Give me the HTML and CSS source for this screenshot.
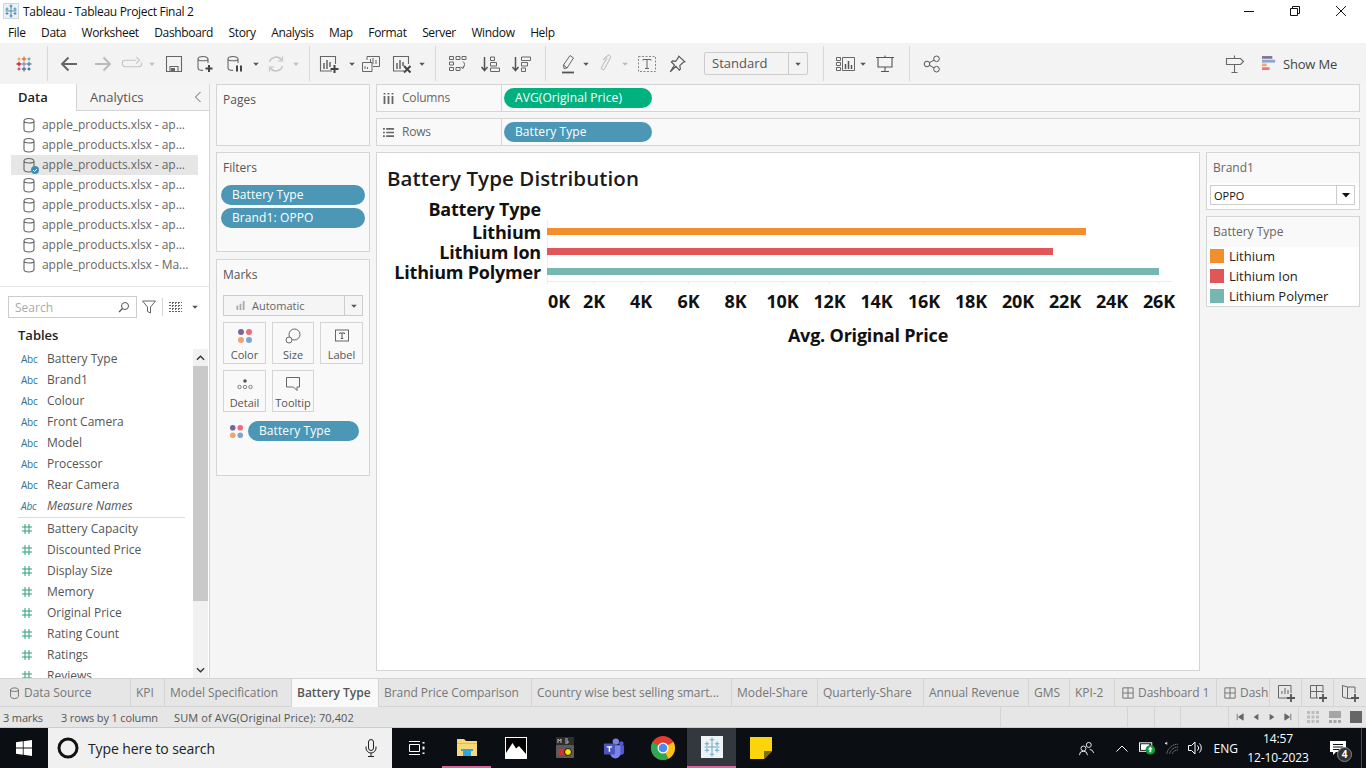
FILE: index.html
```html
<!DOCTYPE html>
<html lang="en">
<head>
<meta charset="utf-8">
<title>Tableau - Tableau Project Final 2</title>
<link rel="stylesheet" href="styles.css">
</head>
<body>
<svg class="defs" width="0" height="0">
  <symbol id="cyl" viewBox="0 0 14 16"><path d="M2 4v8.500c0 1.300 2.200 2.500 5 2.500s5-1.200 5-2.500V4M2 4c0-1.500 2.200-2.500 5-2.500S12 2.500 12 4 9.800 6 7 6 2 5.500 2 4z" fill="none" stroke="#666" stroke-width="1.100"/></symbol>
  <symbol id="caret" viewBox="0 0 8 8"><path d="M1.200 2.800h5.600L4 5.800z" fill="#555"/></symbol>
  <symbol id="caretl" viewBox="0 0 8 8"><path d="M1.200 2.800h5.600L4 5.800z" fill="#bbb"/></symbol>
  <symbol id="hash" viewBox="0 0 12 12"><path d="M4 1v10M8 1v10M1 4h10M1 8h10" stroke="#2e9e7c" stroke-width="1" fill="none"/></symbol>
  <symbol id="dots" viewBox="0 0 16 16"><circle cx="4" cy="4" r="3" fill="#7b6594"/><circle cx="12" cy="4" r="3" fill="#ef6a7c"/><circle cx="4" cy="12" r="3" fill="#f2a26c"/><circle cx="12" cy="12" r="3" fill="#7fa6cf"/></symbol>
  <symbol id="board" viewBox="0 0 14 14"><path d="M1 1h12v12H1zM7 1v12M1 7h12" fill="none" stroke="#666"/></symbol>
</svg>

<header class="titlebar">
  <svg class="app-icon" viewBox="0 0 16 16"><rect x=".5" y=".5" width="15" height="15" fill="#eaf2f7" stroke="#cbd6dd"/><path d="M8 2.500v11M2.500 8h11M4 4.500v3M2.500 6h3M12 4.500v3M10.500 6h3M4 9v3M2.500 10.500h3M12 9v3M10.500 10.500h3M8 1.500v3M6.500 3h3M8 11.500v3M6.500 13h3" stroke="#4b8fb5" stroke-width="1" fill="none"/></svg>
  <span class="title-text">Tableau - Tableau Project Final 2</span>
  <div class="winctl">
    <svg viewBox="0 0 12 12"><path d="M1 6.500h10" stroke="#111"/></svg>
    <svg viewBox="0 0 12 12"><path d="M1.500 3.500h7v7h-7zM3.500 3.500v-2h7v7h-2" fill="none" stroke="#111"/></svg>
    <svg viewBox="0 0 12 12"><path d="M1 1l10 10M11 1L1 11" stroke="#111"/></svg>
  </div>
</header>

<nav class="menubar">
  <span>File</span><span>Data</span><span>Worksheet</span><span>Dashboard</span><span>Story</span><span>Analysis</span><span>Map</span><span>Format</span><span>Server</span><span>Window</span><span>Help</span>
</nav>

<div class="toolbar">
  <span class="ti w47"><svg viewBox="0 0 18 18" class="i18"><path d="M9 1.500v5M6.800 4h4.400" stroke="#e8762c" stroke-width="1.300"/><path d="M9 11.500v5M6.800 14h4.400" stroke="#5a6f9e" stroke-width="1.300"/><path d="M1.500 9h5M4 6.800v4.400" stroke="#c72037" stroke-width="1.300"/><path d="M11.500 9h5M14 6.800v4.400" stroke="#5b879b" stroke-width="1.300"/><path d="M4 2.500v3M2.500 4h3" stroke="#eb912b"/><path d="M14 2.500v3M12.500 4h3" stroke="#59879b"/><path d="M4 12.500v3M2.500 14h3" stroke="#c72037"/><path d="M14 12.500v3M12.500 14h3" stroke="#1f457e"/><path d="M9 7v4M7 9h4" stroke="#7a6f9e"/></svg></span>
  <i class="sep"></i>
  <span class="ti w42"><svg viewBox="0 0 20 20" class="i20"><path d="M18 10H3M9.500 3.500L3 10l6.500 6.500" fill="none" stroke="#666" stroke-width="2"/></svg></span>
  <span class="ti w26"><svg viewBox="0 0 20 20" class="i20"><path d="M2 10h15M10.500 3.500L17 10l-6.500 6.500" fill="none" stroke="#bbb" stroke-width="2"/></svg></span>
  <span class="ti w32"><svg viewBox="0 0 20 14" class="i20w"><path d="M14 4H3.500A2.500 2.500 0 0 0 1 6.500v1A2.500 2.500 0 0 0 3.500 10h13A2.500 2.500 0 0 0 19 7.500V6M14 1l3 3-3 3" fill="none" stroke="#c4c4c4"/></svg></span>
  <span class="ti w8"><svg class="c8"><use href="#caretl"/></svg></span>
  <span class="ti w36"><svg viewBox="0 0 18 18" class="i18"><path d="M1.500 1.500h15v15h-15zM5 16.500v-5h8v5" fill="none" stroke="#666" stroke-width="1.100"/><path d="M6 13h4v3.500H6z" fill="#666"/></svg></span>
  <span class="ti w26"><svg viewBox="0 0 18 18" class="i18"><path d="M2 4v9c0 1.300 2 2.400 5 2.400M12 8V4M2 4c0-1.500 2.200-2.500 5-2.500S12 2.500 12 4 9.800 5.800 7 5.800 2 5.500 2 4z" fill="none" stroke="#666" stroke-width="1.100"/><path d="M13 10v7M9.500 13.500h7" stroke="#444" stroke-width="2"/></svg></span>
  <span class="ti w34"><svg viewBox="0 0 18 18" class="i18"><path d="M2 4v9c0 1.300 2 2.400 5 2.400M12 8V4M2 4c0-1.500 2.200-2.500 5-2.500S12 2.500 12 4 9.800 5.800 7 5.800 2 5.500 2 4z" fill="none" stroke="#666" stroke-width="1.100"/><path d="M11 10.500v6M15 10.500v6" stroke="#444" stroke-width="2"/></svg></span>
  <span class="ti w8"><svg class="c8"><use href="#caret"/></svg></span>
  <span class="ti w32"><svg viewBox="0 0 18 18" class="i18"><path d="M2.500 7A6.700 6.700 0 0 1 14.500 5M15.500 11A6.700 6.700 0 0 1 3.500 13" fill="none" stroke="#c4c4c4" stroke-width="1.500"/><path d="M15.500 1.500V6h-4.500M2.500 16.500V12H7" fill="none" stroke="#c4c4c4" stroke-width="1.200"/></svg></span>
  <span class="ti w8"><svg class="c8"><use href="#caretl"/></svg></span>
  <span class="ti w9"></span>
  <i class="sep"></i>
  <span class="ti w38"><svg viewBox="0 0 20 18" class="i20"><path d="M13 16H1.500V1.500h15V9" fill="none" stroke="#666" stroke-width="1.100"/><path d="M5 8v6M8 5v9M11 7v5" stroke="#666" stroke-width="1.500"/><path d="M15.500 10v8M11.500 14h8" stroke="#444" stroke-width="2"/></svg></span>
  <span class="ti w8"><svg class="c8"><use href="#caret"/></svg></span>
  <span class="ti w30"><svg viewBox="0 0 20 18" class="i20"><path d="M6 5V1.500h12.500v10H12" fill="none" stroke="#666"/><path d="M1.500 7.500H11v9H1.500z" fill="#f3f3f3" stroke="#666"/><path d="M9.500 4v3M12 3v6M15 5v4M4 11v3M6.500 12v2" stroke="#666"/></svg></span>
  <span class="ti w32"><svg viewBox="0 0 20 18" class="i20"><path d="M12 16H1.500V1.500h15V9" fill="none" stroke="#666" stroke-width="1.100"/><path d="M5 8v6M8 5v9M11 7v4" stroke="#666" stroke-width="1.500"/><path d="M12 11l6.500 6.500M18.500 11L12 17.500" stroke="#444" stroke-width="2"/></svg></span>
  <span class="ti w8"><svg class="c8"><use href="#caret"/></svg></span>
  <span class="ti w9"></span>
  <i class="sep"></i>
  <span class="ti w44"><svg viewBox="0 0 20 18" class="i20"><path d="M1.500 1.500h4v3h-4zM1.500 7h4v3h-4zM1.500 12.500h4v3h-4zM8 1.500h4v3H8zM14 1.500h4v3h-4zM8 12.500h4v3H8z" fill="none" stroke="#666"/><path d="M15 6.500c2 1.500 2 4.500 0 6.500M12.500 12l2.500 1.500.5-2.500" fill="none" stroke="#666"/></svg></span>
  <span class="ti w19"><svg viewBox="0 0 20 18" class="i20"><path d="M4.500 2v13M1.500 12l3 3.500 3-3.500" fill="none" stroke="#555" stroke-width="1.500"/><path d="M10.500 2h4v3.500h-4zM10.500 7.500h6v3.500h-6zM10.500 13h9v3.500h-9z" fill="none" stroke="#666"/></svg></span>
  <span class="ti w44"><svg viewBox="0 0 20 18" class="i20"><path d="M4.500 2v13M1.500 12l3 3.500 3-3.500" fill="none" stroke="#555" stroke-width="1.500"/><path d="M10.500 2h9v3.500h-9zM10.500 7.500h6v3.500h-6zM10.500 13h4v3.500h-4z" fill="none" stroke="#666"/></svg></span>
  <span class="ti w2"></span>
  <i class="sep"></i>
  <span class="ti w8"></span>
  <span class="ti w28"><svg viewBox="0 0 14 20" class="i20"><path d="M3 14.500l-.5-3.500L9 1.500l3.500 2.500L6 14zM2.500 11l3.500 3" fill="none" stroke="#666"/><path d="M1 18.500h12" stroke="#555" stroke-width="1.800"/></svg></span>
  <span class="ti w8"><svg class="c8"><use href="#caret"/></svg></span>
  <span class="ti w31"><svg viewBox="0 0 14 20" class="i20"><path d="M4 6L9 1.500c1-.8 3 .5 2.500 2L5.500 15c-.8 1.500-3.500.5-3-1.500L8 4" fill="none" stroke="#c4c4c4" stroke-width="1.200"/></svg></span>
  <span class="ti w8"><svg class="c8"><use href="#caretl"/></svg></span>
  <span class="ti w36"><svg viewBox="0 0 18 16" class="i18"><rect x=".5" y=".5" width="17" height="15" fill="none" stroke="#888" stroke-dasharray="2 1.500"/><path d="M5 4.500V3.500h8v1M9 3.500v9M7 12.500h4" fill="none" stroke="#666"/></svg></span>
  <span class="ti w24"><svg viewBox="0 0 16 16" class="i18"><path d="M9.500 1l5.500 5-1.500.5-3 3 .5 3-1 1L7 10 2 15l3.800-6L3 6.200l1-1 2.800.5L9 2.500z" fill="none" stroke="#555"/></svg></span>
  <span class="ti w15"></span>
  <div class="select std"><span class="select-text">Standard</span><span class="select-btn"><svg class="c8"><use href="#caret"/></svg></span></div>
  <span class="ti w15"></span>
  <i class="sep"></i>
  <span class="ti w7"></span>
  <span class="ti w28"><svg viewBox="0 0 20 16" class="i20"><path d="M1.500 1.500h4v3h-4zM1.500 6.500h4v3h-4zM1.500 11.500h4v3h-4zM7.500 1.500h12v13h-12z" fill="none" stroke="#666"/><path d="M10.500 8v5M13.500 5v8M16.500 9v4" stroke="#555" stroke-width="1.500"/></svg></span>
  <span class="ti w8"><svg class="c8"><use href="#caret"/></svg></span>
  <span class="ti w36"><svg viewBox="0 0 18 18" class="i18"><path d="M0 2.500h18M2 2.500v9.500h14V2.500M9 12v4M5 16.500h8M9 .5v2" fill="none" stroke="#555" stroke-width="1.100"/></svg></span>
  <span class="ti w6"></span>
  <i class="sep"></i>
  <span class="ti w44"><svg viewBox="0 0 18 18" class="i18"><circle cx="4" cy="9" r="2.800" fill="none" stroke="#555"/><circle cx="13.500" cy="3.800" r="2.800" fill="none" stroke="#555"/><circle cx="13.500" cy="14.200" r="2.800" fill="none" stroke="#555"/><path d="M6.500 7.700l4.500-2.600M6.500 10.300l4.500 2.600" stroke="#555"/></svg></span>
  <span class="tb-right">
    <svg viewBox="0 0 20 20" class="i20"><path d="M1.500 4.500h14l3 3-3 3h-14zM9.500 1.500v3M9.500 10.500v8M6.500 18.500h6" fill="none" stroke="#666" stroke-width="1.100"/></svg>
    <svg viewBox="0 0 16 16" class="showme"><path d="M0 0h11v3H0z" fill="#8a7699"/><path d="M0 4h14v3H0z" fill="#84a7cf"/><path d="M0 8h5v3H0z" fill="#f2a874"/><path d="M0 12h8v3H0z" fill="#f2737f"/></svg>
    <span class="showme-text">Show Me</span>
  </span>
</div>

<main class="main">
  <aside class="left">
    <div class="tabs-lr">
      <span class="tab-data">Data</span>
      <span class="tab-an">Analytics<svg viewBox="0 0 8 12" class="chev"><path d="M6.500 1L1.500 6l5 5" fill="none" stroke="#666"/></svg></span>
    </div>
    <ul class="sources">
      <li><svg class="cyl"><use href="#cyl"/></svg>apple_products.xlsx - ap...</li>
      <li><svg class="cyl"><use href="#cyl"/></svg>apple_products.xlsx - ap...</li>
      <li class="sel"><span class="cyl-wrap"><svg class="cyl"><use href="#cyl"/></svg><svg class="check" viewBox="0 0 8 8"><circle cx="4" cy="4" r="4" fill="#3d8fb0"/><path d="M2 4l1.500 1.500L6 3" stroke="#fff" fill="none"/></svg></span>apple_products.xlsx - ap...</li>
      <li><svg class="cyl"><use href="#cyl"/></svg>apple_products.xlsx - ap...</li>
      <li><svg class="cyl"><use href="#cyl"/></svg>apple_products.xlsx - ap...</li>
      <li><svg class="cyl"><use href="#cyl"/></svg>apple_products.xlsx - ap...</li>
      <li><svg class="cyl"><use href="#cyl"/></svg>apple_products.xlsx - ap...</li>
      <li><svg class="cyl"><use href="#cyl"/></svg>apple_products.xlsx - Ma...</li>
    </ul>
    <div class="searchrow">
      <div class="search"><span>Search</span><svg viewBox="0 0 12 12" class="mag"><circle cx="7" cy="5" r="3.500" fill="none" stroke="#555"/><path d="M4.500 7.500L1 11" stroke="#555" stroke-width="1.300"/></svg></div>
      <svg viewBox="0 0 14 14" class="funnel"><path d="M.5 1h13L8.500 7v6l-3-1.500V7z" fill="none" stroke="#666"/></svg>
      <i class="vsep"></i>
      <svg viewBox="0 0 13 10" class="grid-i"><path d="M0 .5h13M0 3.500h13M0 6.500h13M0 9.500h13M3.500 0v10M6.500 0v10M9.500 0v10" stroke="#666" stroke-dasharray="2 1" fill="none"/></svg>
      <svg class="c8"><use href="#caret"/></svg>
    </div>
    <h2 class="tables-h">Tables</h2>
    <div class="fields-wrap">
      <ul class="fields">
        <li><b class="abc">Abc</b>Battery Type</li>
        <li><b class="abc">Abc</b>Brand1</li>
        <li><b class="abc">Abc</b>Colour</li>
        <li><b class="abc">Abc</b>Front Camera</li>
        <li><b class="abc">Abc</b>Model</li>
        <li><b class="abc">Abc</b>Processor</li>
        <li><b class="abc">Abc</b>Rear Camera</li>
        <li class="ital"><b class="abc">Abc</b>Measure Names</li>
        <li class="divider" aria-hidden="true"></li>
        <li><svg class="hash"><use href="#hash"/></svg>Battery Capacity</li>
        <li><svg class="hash"><use href="#hash"/></svg>Discounted Price</li>
        <li><svg class="hash"><use href="#hash"/></svg>Display Size</li>
        <li><svg class="hash"><use href="#hash"/></svg>Memory</li>
        <li><svg class="hash"><use href="#hash"/></svg>Original Price</li>
        <li><svg class="hash"><use href="#hash"/></svg>Rating Count</li>
        <li><svg class="hash"><use href="#hash"/></svg>Ratings</li>
        <li><svg class="hash"><use href="#hash"/></svg>Reviews</li>
      </ul>
      <div class="vscroll">
        <span class="sb-btn"><svg viewBox="0 0 10 6" class="sb-a"><path d="M1 5l4-4 4 4" fill="none" stroke="#333" stroke-width="1.500"/></svg></span>
        <span class="sb-thumb"></span>
        <span class="sb-rest"></span>
        <span class="sb-btn"><svg viewBox="0 0 10 6" class="sb-a"><path d="M1 1l4 4 4-4" fill="none" stroke="#333" stroke-width="1.500"/></svg></span>
      </div>
    </div>
  </aside>

  <section class="cards">
    <div class="card pages"><h3>Pages</h3></div>
    <div class="card filters">
      <h3>Filters</h3>
      <div class="pill blue fp">Battery Type</div>
      <div class="pill blue fp">Brand1: OPPO</div>
    </div>
    <div class="card marks">
      <h3>Marks</h3>
      <div class="select marktype"><svg viewBox="0 0 10 10" class="mt-i"><path d="M1.500 5v5M5 3v7M8.500 0v10" stroke="#aaa" stroke-width="2"/></svg><span class="select-text">Automatic</span><span class="select-btn"><svg class="c8"><use href="#caret"/></svg></span></div>
      <div class="mark-grid">
        <div class="mbtn"><svg class="mi" viewBox="0 0 16 16"><use href="#dots"/></svg><span>Color</span></div>
        <div class="mbtn"><svg class="mi" viewBox="0 0 16 16"><circle cx="9.500" cy="6.500" r="5.500" fill="#f9f9f9" stroke="#666"/><circle cx="4" cy="12" r="3" fill="#f9f9f9" stroke="#666"/></svg><span>Size</span></div>
        <div class="mbtn"><svg class="mi" viewBox="0 0 16 16"><rect x="1.500" y="2" width="13" height="11" fill="none" stroke="#666"/><path d="M5.500 6V5h5v1M8 5v5.500M6.800 10.500h2.400" fill="none" stroke="#555"/></svg><span>Label</span></div>
        <div class="mbtn"><svg class="mi" viewBox="0 0 16 16"><circle cx="8" cy="5" r="1.800" fill="#555"/><circle cx="2.500" cy="11" r="1.700" fill="none" stroke="#666" stroke-width=".8"/><circle cx="8" cy="11" r="1.700" fill="none" stroke="#666" stroke-width=".8"/><circle cx="13.500" cy="11" r="1.700" fill="none" stroke="#666" stroke-width=".8"/></svg><span>Detail</span></div>
        <div class="mbtn"><svg class="mi" viewBox="0 0 16 16"><path d="M1.500 1.500h13v9.500h-2.500v3.500L8.500 11h-7z" fill="none" stroke="#666"/></svg><span>Tooltip</span></div>
      </div>
      <div class="mark-pill"><svg class="md" viewBox="0 0 16 16"><use href="#dots"/></svg><div class="pill blue mp">Battery Type</div></div>
    </div>
  </section>

  <section class="work">
    <div class="shelf"><span class="shelf-l"><svg viewBox="0 0 11 11" class="shelf-i"><path d="M1.500 3v8M5.500 3v8M9.500 3v8M1.500 0v1.500M5.500 0v1.500M9.500 0v1.500" stroke="#666" stroke-width="1.800"/></svg><span class="shelf-t">Columns</span></span><div class="pill green sp">AVG(Original Price)</div></div>
    <div class="shelf"><span class="shelf-l"><svg viewBox="0 0 12 10" class="shelf-i"><path d="M0 1h2M0 5h2M0 9h2M3.500 1H12M3.500 5H12M3.500 9H12" stroke="#666" stroke-width="1.800"/></svg><span class="shelf-t">Rows</span></span><div class="pill blue sp">Battery Type</div></div>
    <div class="viz-row">
      <div class="viz">
        <h1 class="viz-title">Battery Type Distribution</h1>
        <svg class="plot" viewBox="0 0 822 170" role="img">
          <g class="hd"><text x="164" y="26" text-anchor="end">Battery Type</text></g>
          <path d="M170.500 30v62M170 91.500h625M170.500 91v3M217 91v3M264 91v3M311.500 91v3M358.500 91v3M405.500 91v3M452.500 91v3M499.500 91v3M547 91v3M594 91v3M641 91v3M688 91v3M735 91v3M782 91v3" stroke="#ececec" fill="none"/>
          <rect x="170" y="38" width="539" height="7" fill="#f28e2b"/>
          <rect x="170" y="58" width="506" height="7" fill="#e15759"/>
          <rect x="170" y="78" width="612" height="7" fill="#76b7b2"/>
          <g class="hd">
            <text x="164" y="49" text-anchor="end">Lithium</text>
            <text x="164" y="69" text-anchor="end">Lithium Ion</text>
            <text x="164" y="89" text-anchor="end">Lithium Polymer</text>
          </g>
          <g class="hd ticks" text-anchor="middle">
            <text x="182" y="118">0K</text><text x="217" y="118">2K</text><text x="264" y="118">4K</text><text x="311.500" y="118">6K</text><text x="358.500" y="118">8K</text><text x="405.500" y="118">10K</text><text x="452.500" y="118">12K</text><text x="499.500" y="118">14K</text><text x="547" y="118">16K</text><text x="594" y="118">18K</text><text x="641" y="118">20K</text><text x="688" y="118">22K</text><text x="735" y="118">24K</text><text x="782" y="118">26K</text>
          </g>
          <g class="hd"><text x="491" y="152" text-anchor="middle">Avg. Original Price</text></g>
        </svg>
      </div>
      <div class="side">
        <div class="qf">
          <div class="side-h">Brand1</div>
          <div class="qf-body"><div class="qf-sel"><span>OPPO</span><span class="qf-btn"><svg class="c8" viewBox="0 0 8 8"><path d="M0 2h8L4 6.500z" fill="#111"/></svg></span></div></div>
        </div>
        <div class="legend">
          <div class="side-h">Battery Type</div>
          <ul class="legend-body">
            <li><i class="sw sw-o"></i>Lithium</li>
            <li><i class="sw sw-r"></i>Lithium Ion</li>
            <li><i class="sw sw-t"></i>Lithium Polymer</li>
          </ul>
        </div>
      </div>
    </div>
  </section>
</main>

<div class="sheet-tabs">
  <span class="st st-ds"><svg class="cyl" viewBox="0 0 14 16"><use href="#cyl"/></svg>Data Source</span>
  <span class="st st-kpi">KPI</span>
  <span class="st st-ms">Model Specification</span>
  <span class="st st-bt active">Battery Type</span>
  <span class="st st-bp">Brand Price Comparison</span>
  <span class="st st-cw">Country wise best selling smart...</span>
  <span class="st st-mo">Model-Share</span>
  <span class="st st-qs">Quarterly-Share</span>
  <span class="st st-ar">Annual Revenue</span>
  <span class="st st-gm">GMS</span>
  <span class="st st-k2">KPI-2</span>
  <span class="st st-d1"><svg class="bd"><use href="#board"/></svg>Dashboard 1</span>
  <span class="st st-d2"><svg class="bd"><use href="#board"/></svg>Dash</span>
  <span class="st st-nb"><svg viewBox="0 0 18 18" class="i18"><path d="M10 14H1.500V1.500H14V9" fill="none" stroke="#666"/><path d="M5 10V7M8 10V4M11 10V6" stroke="#666"/><path d="M14 10v8M10 14h8" stroke="#555" stroke-width="1.800"/></svg></span>
  <span class="st st-nb"><svg viewBox="0 0 18 18" class="i18"><path d="M9 14H1.500V1.500H14V9M1.500 7.500H14M7.500 1.500V14" fill="none" stroke="#666"/><path d="M14 10v8M10 14h8" stroke="#555" stroke-width="1.800"/></svg></span>
  <span class="st st-nb st-last"><svg viewBox="0 0 18 18" class="i18"><path d="M1.500 1.500L6.500 3v11.500L1.500 13zM6.500 3h7.500v6M6.500 14.500H10" fill="none" stroke="#666"/><path d="M14 10v8M10 14h8" stroke="#555" stroke-width="1.800"/></svg></span>
</div>

<footer class="status">
  <span class="s1">3 marks</span><span class="s2">3 rows by 1 column</span><span class="s3">SUM of AVG(Original Price): 70,402</span>
  <span class="cells"><i class="c-a"></i><i class="c-b"></i><i class="c-b"></i><i class="c-c"></i></span>
  <span class="nav">
    <svg viewBox="0 0 10 10"><path d="M1.500 1v8M9 1v8L3 5z" stroke="#666" fill="#666"/></svg>
    <svg viewBox="0 0 10 10"><path d="M8 1v8L2 5z" fill="#666"/></svg>
    <svg viewBox="0 0 10 10"><path d="M2 1v8l6-4z" fill="#666"/></svg>
    <svg viewBox="0 0 10 10"><path d="M8.500 1v8M1 1v8l6-4z" stroke="#666" fill="#666"/></svg>
  </span>
  <span class="views">
    <svg viewBox="0 0 12 12"><path d="M0 0h3v3H0zM4.500 0h3v3h-3zM9 0h3v3H9zM0 4.500h3v3H0zM4.500 4.500h3v3h-3zM9 4.500h3v3H9zM0 9h3v3H0zM4.500 9h3v3h-3zM9 9h3v3H9z" fill="#bdbdbd"/></svg>
    <svg viewBox="0 0 12 12"><path d="M0 0h12v7H0zM0 9h3v3H0zM4.500 9h3v3h-3zM9 9h3v3H9z" fill="#a5a5a5"/></svg>
    <svg viewBox="0 0 12 12"><path d="M0 0h12v12H0z" fill="#666"/></svg>
  </span>
</footer>

<div class="taskbar">
  <span class="t-win"><svg viewBox="0 0 16 16"><path d="M0 2.300L6.800 1.300V7.600H0zM7.600 1.200L16 0V7.600H7.600zM0 8.400H6.800V14.700L0 13.700zM7.600 8.400H16V16L7.600 14.800z" fill="#fff"/></svg></span>
  <div class="t-search">
    <svg viewBox="0 0 22 22" class="cortana"><circle cx="11" cy="11" r="9" fill="none" stroke="#111" stroke-width="3"/></svg>
    <span class="t-search-text">Type here to search</span>
    <svg viewBox="0 0 12 18" class="mic"><rect x="3.500" y=".5" width="5" height="11" rx="2.500" fill="none" stroke="#222"/><path d="M1 7.500v1.500a5 5 0 0 0 10 0V7.500M6 14v3M3 17.500h6" fill="none" stroke="#222"/></svg>
  </div>
  <span class="t-taskview"><svg viewBox="0 0 18 14"><path d="M1 .5h11M1 13.500h11M1.500 3.500h10v7h-10z" fill="none" stroke="#fff"/><path d="M15.500 1v1.500M15.500 5.500v3M15.500 11.500V13" stroke="#fff" stroke-width="2"/></svg></span>
  <span class="t-app t-run t-explorer">
    <svg viewBox="0 0 22 20"><path d="M1 2h7l2 2h11v15H1z" fill="#f8d775"/><path d="M1 6h20v1H1z" fill="#e8b949"/><path d="M5 12h12v2h-2v5H7v-5H5z" fill="#2ea7e0"/></svg>
  </span>
  <span class="t-app"><svg viewBox="0 0 22 22"><rect width="22" height="22" fill="#fff"/><rect x="1" y="1" width="20" height="19" fill="#000"/><path d="M1 20v-4L7.500 6l3.500 5.500 3-2.500 7 8v3z" fill="#fff"/></svg></span>
  <span class="t-app"><svg viewBox="0 0 20 22"><rect x="1" y="0" width="18" height="8" fill="#2d2d2d"/><path d="M3 2v4M6 2v4M3 2l1.500 2L6 2M10 2h3M10 4h3M13 4v2h-3" fill="none" stroke="#bbb"/><rect x="1" y="8" width="18" height="13" rx="1" fill="#5a5a5a"/><circle cx="7" cy="15" r="3.500" fill="#d0342c"/><circle cx="13" cy="15" r="3.500" fill="#f4e20c" stroke="#111"/></svg></span>
  <span class="t-app"><svg viewBox="0 0 24 22"><circle cx="14" cy="4" r="3.500" fill="#7b83eb"/><circle cx="20" cy="6" r="2.500" fill="#5059c9"/><path d="M16 8h7v7a3.500 3.500 0 0 1-7 0z" fill="#5059c9"/><path d="M8 8h11v9a5.500 5.500 0 0 1-11 0z" fill="#7b83eb"/><rect x="1" y="6" width="12" height="12" rx="1" fill="#4b53bc"/><path d="M4 9h6v1.500H7.800V15H6.200v-4.500H4z" fill="#fff"/></svg></span>
  <span class="t-app"><svg viewBox="0 0 24 24" class="chrome"><circle cx="12" cy="12" r="12" fill="#e33b2e"/><path d="M12 12L22.400 6a12 12 0 0 1-5.200 16.800z" fill="#fbc116"/><path d="M12 12l5.200 10.800A12 12 0 0 1 1.600 6z" fill="#2da94f"/><circle cx="12" cy="12" r="5.500" fill="#fff"/><circle cx="12" cy="12" r="4.300" fill="#4a8af4"/></svg></span>
  <span class="t-app t-run t-active"><svg viewBox="0 0 24 24"><rect width="24" height="24" fill="#eef3f6"/><path d="M12 4v16M4 12h16M6.500 6v5M4 8.500h5M17.500 6v5M15 8.500h5M6.500 13v5M4 15.500h5M17.500 13v5M15 15.500h5M12 1.500v5M9.500 4h5M12 17.500v5M9.500 20h5" stroke="#6fa9cc" stroke-width="1.100"/></svg></span>
  <span class="t-app"><svg viewBox="0 0 22 22"><path d="M0 0h22v14l-8 8H0z" fill="#fbd40b"/><path d="M22 14l-8 8v-8z" fill="#7a6a10"/></svg></span>
  <div class="tray">
    <svg class="tr-p" viewBox="0 0 18 16"><circle cx="11" cy="4" r="2.800" fill="none" stroke="#fff"/><circle cx="5" cy="8" r="2.800" fill="none" stroke="#fff"/><path d="M.5 15.500a4.500 4.500 0 0 1 9 0M12 9a5 5 0 0 1 4.500 4" fill="none" stroke="#fff"/></svg>
    <svg class="tr-c" viewBox="0 0 12 7"><path d="M.5 6.500L6 1l5.500 5.500" fill="none" stroke="#fff"/></svg>
    <svg class="tr-b" viewBox="0 0 18 14"><rect x=".5" y="1.500" width="13" height="9" fill="none" stroke="#fff"/><rect x="2" y="3" width="9" height="6" fill="#fff"/><circle cx="12" cy="9" r="5" fill="#0f9d3a"/><path d="M12 5.500l2.500 3h-1.500v3h-2v-3H9.500z" fill="#fff"/></svg>
    <svg class="tr-w" viewBox="0 0 16 14"><path d="M1 1.500l2 1M3 .5v3M1 2.500l2-1" stroke="#fff" stroke-width=".8"/><path d="M3 13A12 12 0 0 1 15 3M6 13a9 9 0 0 1 9-7M9 13a6 6 0 0 1 6-4" fill="none" stroke="#8d8d8d" stroke-dasharray="1.500 .7"/></svg>
    <svg class="tr-v" viewBox="0 0 16 14"><path d="M.5 4.500h3L7 1v12L3.500 9.500h-3z" fill="none" stroke="#fff"/><path d="M9.500 4.500a3.500 3.500 0 0 1 0 5M11.500 2.500a6.500 6.500 0 0 1 0 9" fill="none" stroke="#fff"/></svg>
    <span class="tr-eng">ENG</span>
    <span class="clock"><span>14:57</span><span>12-10-2023</span></span>
    <span class="notif"><svg viewBox="0 0 16 15"><path d="M0 0h16v11H6l-3 3v-3H0z" fill="#fff"/><path d="M3 3.500h10M3 6h10M3 8.500h6" stroke="#111"/></svg><b class="badge">4</b></span>
    <i class="showdesk"></i>
  </div>
</div>
</body>
</html>
```

FILE: styles.css
```css
* { box-sizing: border-box; }
html, body { margin: 0; padding: 0; }
body { width: 1366px; height: 768px; overflow: hidden; background: #f5f5f5; font-family: "Open Sans", "Liberation Sans", sans-serif; font-size: 12px; color: #555; }
ul { list-style: none; margin: 0; padding: 0; }
h1, h2, h3 { margin: 0; }
svg { display: block; flex: none; }
i { font-style: normal; }
.defs { position: absolute; }

.titlebar { height: 22px; background: #fff; display: flex; align-items: center; padding-left: 3px; color: #111; }
.app-icon { width: 16px; height: 16px; }
.title-text { margin-left: 4px; font-size: 12px; letter-spacing: -.3px; }
.winctl { margin-left: auto; display: flex; gap: 34px; padding-right: 19px; }
.winctl svg { width: 12px; height: 12px; }

.menubar { height: 21px; background: #fff; display: flex; padding-left: 8px; color: #111; font-size: 12px; line-height: 22px; }
.menubar span { margin-right: 15.500px; letter-spacing: -.35px; }

.toolbar { height: 41px; background: #f3f3f3; display: flex; align-items: center; }
.ti { height: 24px; display: flex; align-items: center; justify-content: center; flex: none; }
.w2 { width: 2px; } .w6 { width: 6px; } .w7 { width: 7px; } .w8 { width: 8px; } .w9 { width: 9px; } .w15 { width: 15px; } .w19 { width: 19px; }
.w24 { width: 24px; } .w26 { width: 26px; } .w28 { width: 28px; } .w30 { width: 30px; } .w31 { width: 31px; } .w32 { width: 32px; } .w34 { width: 34px; } .w36 { width: 36px; }
.w38 { width: 38px; } .w42 { width: 42px; } .w44 { width: 44px; } .w47 { width: 47px; }
.sep { width: 1px; height: 35px; background: #d8d8d8; flex: none; }
.i18 { width: 18px; height: 18px; }
.i20 { width: 20px; height: 20px; }
.i20w { width: 22px; height: 15px; }
.c8 { width: 8px; height: 8px; }
.select { display: flex; align-items: center; border: 1px solid #ccc; background: #f3f3f3; }
.select-text { flex: 1; }
.select-btn { width: 18px; align-self: stretch; border-left: 1px solid #ccc; display: flex; align-items: center; justify-content: center; }
.std { width: 104px; height: 23px; padding-left: 7px; font-size: 13px; color: #555; flex: none; border-radius: 2px; }
.std .select-text { margin-top: -2px; }
.std .select-btn { width: 19px; }
.tb-right { margin-left: auto; display: flex; align-items: center; padding-right: 29px; color: #444; }
.showme { width: 15px; height: 15px; margin-left: 17px; }
.showme-text { margin-left: 6px; font-size: 13px; letter-spacing: -.2px; }

.main { height: 594px; display: flex; align-items: flex-start; }
.left { width: 210px; height: 594px; background: #fff; border-right: 1px solid #d6d6d6; overflow: hidden; flex: none; }
.tabs-lr { height: 27px; display: flex; }
.tab-data { width: 77px; padding-left: 18px; line-height: 26px; font-weight: 600; font-size: 13px; color: #222; border-right: 1px solid #d4d4d4; }
.tab-an { flex: 1; padding-left: 13px; line-height: 26px; font-size: 13px; border-bottom: 1px solid #d4d4d4; background: #f5f5f5; display: flex; align-items: center; justify-content: space-between; padding-right: 7px; }
.chev { width: 8px; height: 12px; }
.sources { padding: 4px 0 0 11px; height: 176px; border-bottom: 1px solid #e6e6e6; }
.sources li { height: 20px; width: 187px; display: flex; align-items: center; padding-left: 11px; padding-bottom: 1px; font-size: 12px; color: #666; letter-spacing: -.05px; }
.sources .sel { background: #e6e6e6; }
.sources .cyl { margin-top: 1px; margin-right: 6px; }
.cyl { width: 14px; height: 16px; margin-right: 5px; }
.cyl-wrap { position: relative; display: block; }
.check { position: absolute; left: 9px; top: 10px; width: 8px; height: 8px; }
.searchrow { height: 31px; padding: 9px 0 0 8px; display: flex; align-items: center; }
.search { width: 129px; height: 22px; border: 1px solid #ccc; background: #fff; display: flex; align-items: center; justify-content: space-between; padding: 0 6px; color: #aaa; font-size: 12px; flex: none; }
.mag { width: 12px; height: 12px; }
.funnel { width: 14px; height: 14px; margin-left: 5px; }
.vsep { width: 1px; height: 18px; background: #d4d4d4; margin: 0 6px; }
.grid-i { width: 13px; height: 10px; margin-right: 9px; }
.tables-h { font-size: 13px; font-weight: 600; color: #222; padding: 7px 0 0 18px; height: 31px; line-height: 20px; }
.fields-wrap { display: flex; height: 329px; }
.fields { width: 193px; flex: none; margin-top: -1px; overflow: hidden; }
.fields li { height: 21px; display: flex; align-items: center; padding-left: 21px; color: #555; font-size: 12px; letter-spacing: 0; }
.fields .ital { font-style: italic; }
.fields .divider { height: 1px; background: #dcdcdc; margin: 1px 8px 0 18px; padding: 0; }
.abc { width: 26px; font-size: 10px; font-weight: 400; color: #2f7396; flex: none; letter-spacing: -.2px; }
.hash { width: 12px; height: 12px; margin-right: 14px; }
.vscroll { width: 15px; display: flex; flex-direction: column; background: #f1f1f1; }
.sb-btn { height: 17px; display: flex; align-items: center; justify-content: center; }
.sb-a { width: 9px; height: 6px; }
.sb-thumb { height: 235px; background: #c9c9c9; }
.sb-rest { flex: 1; }

.cards { width: 154px; margin-left: 6px; display: flex; flex-direction: column; flex: none; }
.card { background: #f9f9f9; border: 1px solid #d4d4d4; padding: 0 4px; }
.card h3 { font-size: 12px; font-weight: 400; color: #555; padding: 6px 0 0 2px; height: 28px; line-height: 17px; }
.pages { height: 62px; }
.filters { height: 100px; margin-top: 6px; padding-top: 4px; }
.marks { height: 217px; margin-top: 7px; padding-top: 0; padding-left: 6px; padding-right: 6px; }
.marks h3 { padding-left: 0; height: 35px; padding-top: 6px; }
.pill { height: 20px; border-radius: 10px; color: #fff; line-height: 20px; font-size: 12px; padding-left: 11px; letter-spacing: .1px; }
.blue { background: #4b97b5; }
.green { background: #00b180; }
.fp { width: 144px; margin-top: 3px; }
.filters h3 { height: 25px; padding-top: 2px; }
.marktype { height: 21px; width: 140px; padding-left: 12px; background: #f5f5f5; color: #666; font-size: 11px; }
.mt-i { width: 9px; height: 9px; margin-right: 7px; }
.marktype .select-btn { width: 18px; }
.mark-grid { display: grid; grid-template-columns: 43px 42px 43px; gap: 6px; margin-top: 6px; }
.mbtn { height: 42px; border: 1px solid #d4d4d4; display: flex; flex-direction: column; align-items: center; font-size: 11px; color: #555; padding-top: 5px; background: #f9f9f9; }
.mbtn span { line-height: 14px; margin-top: 4px; white-space: nowrap; }
.mi { width: 16px; height: 16px; }
.mark-pill { display: flex; align-items: center; margin-top: 9px; padding-left: 6px; }
.md { width: 15px; height: 15px; margin-right: 4px; }
.mp { width: 111px; }

.work { width: 984px; margin-left: 6px; flex: none; }
.shelf { height: 28px; width: 984px; background: #f9f9f9; border: 1px solid #d4d4d4; display: flex; align-items: center; margin-bottom: 6px; }
.shelf-l { width: 125px; align-self: stretch; border-right: 1px solid #d4d4d4; display: flex; align-items: center; padding-left: 6px; color: #666; font-size: 12px; letter-spacing: -.2px; }
.shelf-t { margin-top: -2px; }
.shelf-i { width: 11px; height: 11px; margin-right: 8px; }
.sp { width: 148px; margin-left: 2px; }
.viz-row { display: flex; gap: 6px; }
.viz { width: 824px; height: 519px; background: #fff; border: 1px solid #d4d4d4; color: #111; }
.viz-title { font-size: 20.500px; font-weight: 600; color: #1a1a1a; line-height: 26px; padding: 12px 0 0 10px; letter-spacing: .1px; }
.plot { width: 822px; height: 170px; margin-top: -1px; }
.hd text { font-family: "Open Sans", sans-serif; font-size: 18px; font-weight: 700; fill: #111; letter-spacing: -.2px; }
.side { width: 154px; display: flex; flex-direction: column; gap: 6px; }
.side-h { height: 30px; background: #f9f9f9; padding: 6px 0 0 6px; line-height: 17px; color: #666; font-size: 12px; }
.qf { height: 58px; background: #fff; border: 1px solid #d4d4d4; }
.qf-body { padding: 2px 4px 0 3px; background: #fff; }
.qf-sel { height: 20px; border: 1px solid #ccc; display: flex; align-items: center; justify-content: space-between; padding-left: 3px; color: #111; font-size: 11px; }
.qf-btn { width: 18px; align-self: stretch; border-left: 1px solid #ccc; display: flex; align-items: center; justify-content: center; }
.legend { height: 91px; background: #fff; border: 1px solid #d4d4d4; }
.legend-body { padding: 0 0 0 3px; margin-top: -1px; }
.legend-body li { height: 20px; display: flex; align-items: center; color: #222; font-size: 13px; letter-spacing: 0; }
.sw { width: 14px; height: 14px; margin-right: 5px; }
.sw-o { background: #f28e2b; } .sw-r { background: #e15759; } .sw-t { background: #76b7b2; }

.sheet-tabs { height: 29px; background: #e6e6e6; border-top: 1px solid #d4d4d4; display: flex; font-size: 12px; color: #777; }
.st { height: 28px; border-right: 1px solid #d4d4d4; display: flex; align-items: center; flex: none; white-space: nowrap; overflow: hidden; letter-spacing: -.05px; border-bottom: 1px solid #d4d4d4; }
.st-ds { width: 131px; padding-left: 9px; }
.st-ds .cyl { width: 11px; height: 14px; margin-right: 4px; }
.st-kpi { width: 34px; padding-left: 5px; }
.st-ms { width: 127px; padding-left: 5px; }
.st-bt { width: 87px; padding-left: 5px; }
.active { background: #f9f9f9; color: #555; font-weight: 600; border-bottom: 0; height: 28px; letter-spacing: 0; padding-bottom: 2px; }
.st-bp { width: 153px; padding-left: 5px; }
.st-cw { width: 200px; padding-left: 5px; }
.st-mo { width: 86px; padding-left: 5px; }
.st-qs { width: 106px; padding-left: 5px; }
.st-ar { width: 105px; padding-left: 5px; }
.st-gm { width: 41px; padding-left: 5px; }
.st-k2 { width: 45px; padding-left: 5px; }
.st-d1 { width: 102px; padding-left: 7px; }
.st-d2 { width: 53px; padding-left: 7px; }
.bd { width: 12px; height: 12px; margin-right: 4px; }
.st-nb { width: 32px; justify-content: center; }
.st-last { border-right: 0; }

.status { height: 21px; background: #e6e6e6; border-bottom: 1px solid #ccc; display: flex; align-items: center; font-size: 11px; color: #555; letter-spacing: -.15px; }
.s1 { margin-left: 3px; width: 58px; }
.s2 { width: 113px; }
.s3 { flex: none; width: 826px; letter-spacing: .1px; }
.cells { display: flex; align-self: stretch; flex: none; }
.cells i { display: block; border-left: 1px solid #d4d4d4; }
.c-a { width: 127px; } .c-b { width: 26.500px; } .c-c { width: 48px; }
.nav { display: flex; align-self: stretch; align-items: center; gap: 8px; width: 70px; flex: none; padding-left: 7px; border-left: 1px solid #d4d4d4; }
.nav svg { width: 8px; height: 8px; }
.views { display: flex; gap: 9.500px; align-self: stretch; align-items: center; padding-left: 8px; border-left: 1px solid #d4d4d4; }
.views svg { width: 12px; height: 12px; }

.taskbar { height: 40px; background: #0b0e12; display: flex; align-items: stretch; color: #fff; }
.t-win { width: 48px; display: flex; align-items: center; justify-content: center; flex: none; }
.t-win svg { width: 16px; height: 16px; }
.t-search { width: 344px; background: #f0f0f0; display: flex; align-items: center; color: #222; flex: none; padding-left: 9px; }
.cortana { width: 22px; height: 22px; }
.t-search-text { margin-left: 9px; font-size: 14px; flex: 1; letter-spacing: -.1px; }
.mic { width: 12px; height: 18px; margin-right: 15px; }
.t-taskview { width: 50px; display: flex; align-items: center; justify-content: center; flex: none; }
.t-taskview svg { width: 18px; height: 14px; }
.t-app { width: 49px; display: flex; align-items: center; justify-content: center; flex: none; }
.t-app svg { width: 22px; height: 22px; }
.t-app .chrome { width: 24px; height: 24px; }
.t-run { border-bottom: 2px solid #e0619e; }
.t-active { background: #32383e; }
.tray { margin-left: auto; display: flex; align-items: center; font-size: 12px; }
.tr-p { width: 16px; height: 15px; margin-right: 21px; }
.tr-c { width: 12px; height: 7px; margin-right: 11px; }
.tr-b { width: 17px; height: 14px; margin-right: 8px; }
.tr-w { width: 15px; height: 14px; margin-right: 9px; }
.tr-v { width: 16px; height: 14px; margin-right: 10px; }
.tr-eng { margin-right: 11px; }
.clock { display: flex; flex-direction: column; align-items: center; line-height: 19px; width: 58px; margin-right: 23px; white-space: nowrap; letter-spacing: -.1px; }
.notif { position: relative; width: 16px; display: block; }
.notif svg { width: 16px; height: 15px; }
.badge { position: absolute; left: 7px; top: 6px; width: 15px; height: 15px; border-radius: 50%; background: #333; border: 1px solid #888; font-size: 10px; font-weight: 700; line-height: 13px; text-align: center; color: #fff; }
.showdesk { width: 1px; height: 40px; background: #4a4a4a; margin: 0 4px 0 15px; }
```
